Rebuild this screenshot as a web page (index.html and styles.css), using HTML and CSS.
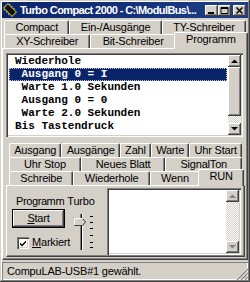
FILE: index.html
```html
<!DOCTYPE html>
<html lang="de">
<head>
    <meta charset="UTF-8">
    <title>Turbo Compact 2000</title>
    <link rel="stylesheet" href="styles.css">
</head>
<body>

<div class="window">

    <!-- Titelleiste -->
    <div class="titlebar">
        <svg class="app-icon" viewBox="0 0 14 14">
            <g transform="rotate(45 7 7)">
                <rect x="1" y="4" width="12" height="6" fill="#101010" stroke="#b8b040" stroke-width="1"/>
                <path d="M3 2.5v1.5M6 2.5v1.5M9 2.5v1.5M3 10v1.5M6 10v1.5M9 10v1.5" stroke="#d0c860" stroke-width="1"/>
            </g>
        </svg>
        <span class="title">Turbo Compact 2000 - C:\ModulBus\...</span>
        <div class="caption-btns">
            <span class="cbtn"><svg viewBox="0 0 13 11"><rect x="3" y="7" width="6" height="2" fill="#000"/></svg></span>
            <span class="cbtn"><svg viewBox="0 0 13 11"><path d="M3 2.5h7v6h-7z" fill="none" stroke="#000"/><rect x="3" y="2" width="7" height="2" fill="#000"/></svg></span>
            <span class="cbtn close"><svg viewBox="0 0 13 11"><path d="M3.5 2.5l6 6M9.5 2.5l-6 6" stroke="#000" stroke-width="1.5"/></svg></span>
        </div>
    </div>

    <!-- Obere Reiter -->
    <div class="tabs top-tabs">
        <div class="tab-row">
            <span class="tab">Compact</span>
            <span class="tab">Ein-/Ausgänge</span>
            <span class="tab">TY-Schreiber</span>
        </div>
        <div class="tab-row">
            <span class="tab">XY-Schreiber</span>
            <span class="tab">Bit-Schreiber</span>
            <span class="tab active">Programm</span>
        </div>
    </div>

    <div class="panel outer">

        <!-- Programmliste -->
        <div class="listbox">
            <ul class="lines">
                <li>Wiederhole</li>
                <li class="sel"> Ausgang 0 = I</li>
                <li> Warte 1.0 Sekunden</li>
                <li> Ausgang 0 = 0</li>
                <li> Warte 2.0 Sekunden</li>
                <li>Bis Tastendruck</li>
            </ul>
            <div class="vscroll">
                <span class="sb-btn"><svg viewBox="0 0 7 4"><path d="M0 4h7L3.5 0.5z" fill="#000"/></svg></span>
                <span class="sb-thumb"></span>
                <span class="sb-track"></span>
                <span class="sb-btn"><svg viewBox="0 0 7 4"><path d="M0 0h7L3.5 3.5z" fill="#000"/></svg></span>
            </div>
        </div>

        <!-- Befehls-Reiter -->
        <div class="tabs inner-tabs">
            <div class="tab-row">
                <span class="tab">Ausgang</span>
                <span class="tab">Ausgänge</span>
                <span class="tab">Zahl</span>
                <span class="tab">Warte</span>
                <span class="tab">Uhr Start</span>
            </div>
            <div class="tab-row">
                <span class="tab">Uhr Stop</span>
                <span class="tab">Neues Blatt</span>
                <span class="tab">SignalTon</span>
            </div>
            <div class="tab-row">
                <span class="tab">Schreibe</span>
                <span class="tab">Wiederhole</span>
                <span class="tab">Wenn</span>
                <span class="tab active">RUN</span>
            </div>
        </div>

        <div class="panel run">
            <div class="prog-col">
                <div class="label prog-label">Programm</div>
                <div class="button"><u>S</u>tart</div>
                <div class="check-row">
                    <span class="checkbox"><svg viewBox="0 0 8 8"><path d="M1 3.5l2 2 4-4v2l-4 4-2-2z" fill="#000"/></svg></span>
                    <span><u>M</u>arkiert</span>
                </div>
            </div>
            <div class="turbo-col">
                <div class="label">Turbo</div>
                <svg class="slider" viewBox="0 0 30 40">
                    <rect x="14" y="2" width="1" height="36" fill="#808080"/>
                    <rect x="15" y="2" width="1" height="36" fill="#000"/>
                    <rect x="16" y="2" width="1" height="36" fill="#fff"/>
                    <path d="M8.5 6.5h8l3 3.5-3 3.5h-8z" fill="#d4d0c8" stroke="#404040"/>
                    <path d="M8.5 13v-6.5h8" fill="none" stroke="#fff"/>
                    <path d="M24 4.5h3M24 10.5h3M24 16.5h3M24 23.5h3M24 30.5h3M24 35.5h3" stroke="#000"/>
                </svg>
            </div>
            <div class="memo">
                <div class="memo-text"></div>
                <div class="vscroll">
                    <span class="sb-btn"><svg viewBox="0 0 7 4"><path d="M0 4h7L3.5 0.5z" fill="#808080"/></svg></span>
                    <span class="sb-track"></span>
                    <span class="sb-btn"><svg viewBox="0 0 7 4"><path d="M0 0h7L3.5 3.5z" fill="#808080"/></svg></span>
                </div>
            </div>
        </div>

    </div>

    <!-- Statuszeile -->
    <div class="statusbar">
        <span>CompuLAB-USB#1 gewählt.</span>
        <svg class="grip" viewBox="0 0 12 12">
            <path d="M11 1L1 11M11 5L5 11M11 9L9 11" stroke="#fff"/>
            <path d="M12 1L1 12M12 5L5 12M12 9L9 12" stroke="#808080" stroke-width="1.2"/>
        </svg>
    </div>

</div>

</body>
</html>
```

FILE: styles.css
```css
/* Fenster im Windows-2000-Stil */
body {
    margin: 0;
    background: #d4d0c8;
    font: 11px "Liberation Sans", Arial, sans-serif;
    letter-spacing: -0.2px;
    color: #000;
}

.window {
    width: 250px;
    height: 282px;
    box-sizing: border-box;
    padding: 2px;
    display: flex;
    flex-direction: column;
    overflow: hidden;
    box-shadow: inset -1px -1px #404040, inset 1px 1px #d4d0c8, inset -2px -2px #808080, inset 2px 2px #fff;
}

/* Titelleiste */
.titlebar {
    height: 16px;
    flex: none;
    display: flex;
    align-items: center;
    padding: 0 2px 0 1px;
    background: linear-gradient(90deg, #0a246a, #1e3f86);
    color: #fff;
    font: bold 11px "Liberation Sans", Arial, sans-serif;
    letter-spacing: -0.6px;
}

.app-icon {
    width: 14px;
    height: 14px;
    flex: none;
    margin-right: 3px;
}

.title {
    flex: 1;
    white-space: nowrap;
    overflow: hidden;
}

.caption-btns {
    display: flex;
}

.cbtn {
    width: 13px;
    height: 11px;
    background: #d4d0c8;
    box-shadow: inset -1px -1px #404040, inset 1px 1px #fff, inset -2px -2px #808080;
    display: flex;
}

.cbtn svg {
    width: 13px;
    height: 11px;
}

.cbtn.close {
    margin-left: 2px;
}

/* Reiter */
.top-tabs {
    margin-top: 2px;
}

.inner-tabs {
    margin: 6px 0 0 1px;
}

.tab-row {
    display: flex;
    height: 14px;
    padding: 0 2px;
}

.tab {
    flex: 1 1 auto;
    box-sizing: border-box;
    height: 14px;
    padding: 0 3px;
    text-align: center;
    line-height: 13px;
    white-space: nowrap;
    border: 1px solid #fff;
    border-bottom: 0;
    border-right-color: #404040;
    border-radius: 2px 2px 0 0;
    box-shadow: inset -1px 0 #808080;
}

.tab.active {
    position: relative;
    z-index: 1;
    height: 17px;
    margin: -2px -2px 0;
    background: #d4d0c8;
}

/* Reiter-Flächen */
.panel {
    background: #d4d0c8;
    border: 1px solid;
    border-color: #fff #404040 #404040 #fff;
    box-shadow: inset -1px -1px #808080;
}

.outer {
    flex: 1;
    min-height: 0;
    padding: 2px 3px 2px 3px;
    display: flex;
    flex-direction: column;
}

/* Liste */
.listbox {
    height: 84px;
    flex: none;
    margin: 2px 1px 0 0;
    padding: 2px;
    box-sizing: border-box;
    display: flex;
    background: #fff;
    box-shadow: inset 1px 1px #808080, inset 2px 2px #404040, inset -1px -1px #fff, inset -2px -2px #d4d0c8;
}

.lines {
    flex: 1;
    margin: 0;
    padding: 0 1px;
    list-style: none;
    font: bold 11px/13px "Liberation Mono", monospace;
    letter-spacing: 0;
}

.lines li {
    height: 13px;
    padding-left: 6px;
    white-space: pre;
}

.lines .sel {
    background: #0a246a;
    color: #fff;
    outline: 1px dotted #c8c8c8;
    outline-offset: -1px;
}

.vscroll {
    width: 13px;
    display: flex;
    flex-direction: column;
}

.sb-btn {
    height: 12px;
    flex: none;
    display: flex;
    align-items: center;
    justify-content: center;
    background: #d4d0c8;
    box-shadow: inset -1px -1px #404040, inset 1px 1px #fff, inset -2px -2px #808080;
}

.sb-btn svg {
    width: 7px;
    height: 4px;
}

.sb-thumb {
    height: 49px;
    flex: none;
    background: #d4d0c8;
    box-shadow: inset -1px -1px #404040, inset 1px 1px #fff, inset -2px -2px #808080;
}

.sb-track {
    flex: 1;
    background: repeating-conic-gradient(#d4d0c8 0 25%, #fff 0 50%) 0 0 / 2px 2px;
}

/* RUN-Seite */
.run {
    flex: 1;
    min-height: 0;
    margin-right: -1px;
    padding: 2px 3px 1px 2px;
    display: flex;
}

.prog-col {
    width: 53px;
    padding-left: 3px;
}

.label {
    margin-top: 7px;
    line-height: 13px;
    text-align: center;
}

.prog-label {
    text-align: left;
    padding-left: 4px;
    letter-spacing: -0.4px;
}

.button {
    height: 19px;
    margin-top: 1px;
    box-sizing: border-box;
    border: 1px solid #000;
    line-height: 16px;
    text-align: center;
    box-shadow: inset -1px -1px #404040, inset 1px 1px #fff, inset -2px -2px #808080;
}

.check-row {
    display: flex;
    align-items: center;
    gap: 3px;
    margin: 8px 0 0 5px;
    line-height: 13px;
}

.checkbox {
    width: 12px;
    height: 12px;
    box-sizing: border-box;
    padding: 2px;
    background: #fff;
    box-shadow: inset 1px 1px #808080, inset 2px 2px #404040, inset -1px -1px #fff, inset -2px -2px #d4d0c8;
    display: flex;
}

.checkbox svg {
    width: 8px;
    height: 8px;
}

.turbo-col {
    width: 30px;
    margin-left: 1px;
}

.slider {
    display: block;
    width: 30px;
    height: 40px;
    margin-top: 4px;
}

.memo {
    flex: 1;
    margin-left: 11px;
    padding: 2px;
    display: flex;
    background: #fff;
    box-shadow: inset 1px 1px #808080, inset 2px 2px #404040, inset -1px -1px #fff, inset -2px -2px #d4d0c8;
}

.memo-text {
    flex: 1;
}

/* Statuszeile */
.statusbar {
    height: 18px;
    flex: none;
    margin-top: 2px;
    padding-left: 5px;
    display: flex;
    align-items: center;
    box-shadow: inset 1px 1px #808080, inset -1px -1px #fff;
}

.grip {
    width: 12px;
    height: 12px;
    margin-left: auto;
    align-self: flex-end;
}
```
